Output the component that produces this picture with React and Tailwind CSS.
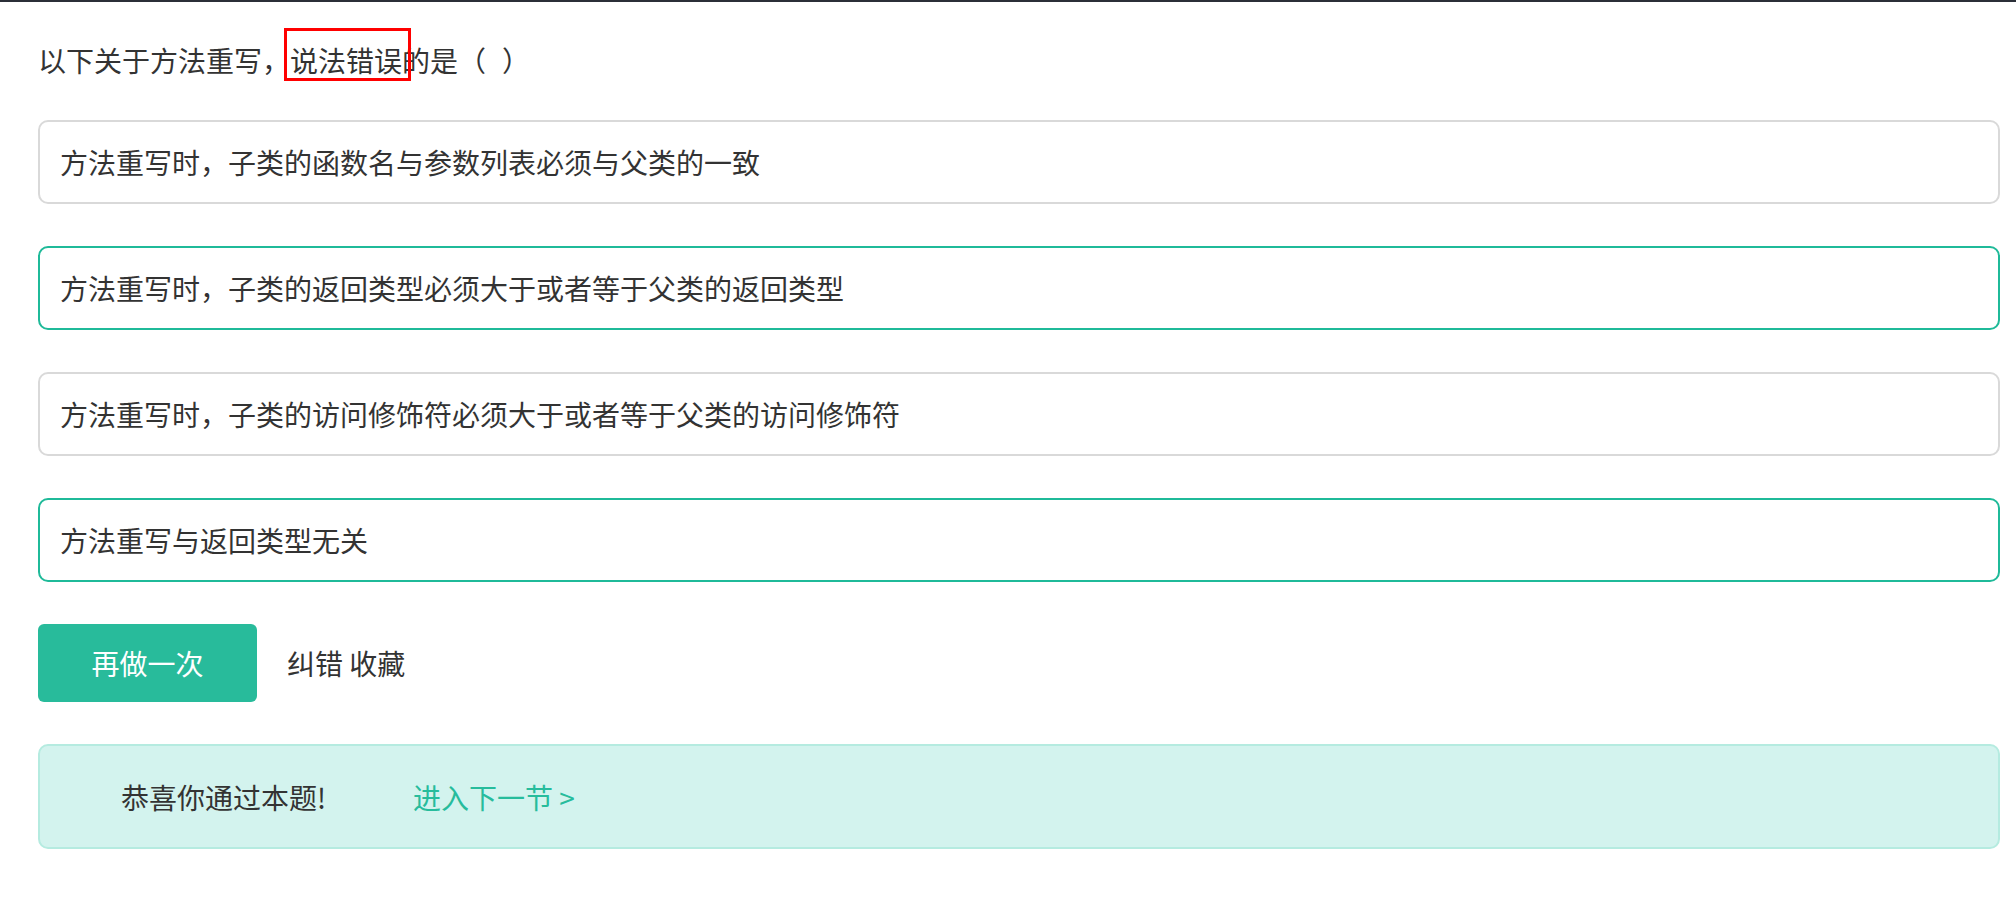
export default function App() {
  const options = [
    { text: "方法重写时，子类的函数名与参数列表必须与父类的一致", green: false },
    { text: "方法重写时，子类的返回类型必须大于或者等于父类的返回类型", green: true },
    { text: "方法重写时，子类的访问修饰符必须大于或者等于父类的访问修饰符", green: false },
    { text: "方法重写与返回类型无关", green: true },
  ];
  return (
    <div
      className="w-[2016px] min-h-[902px] bg-white text-[#333333]"
      style={{ fontFamily: '"Noto Sans CJK SC", "Noto Sans", sans-serif' }}
    >
      <div className="h-[2px] bg-[#2b2f38]" />
      <div className="pl-[38px] pr-[16px]">
        <div className="relative mt-[36px] h-[44px] text-[28px] leading-[44px]">
          以下关于方法重写，说法错误的是（<span className="inline-block w-[16px]" />）
          <div className="absolute left-[246px] top-[-10px] h-[53px] w-[127px] border-[3px] border-[#ff0000]" />
        </div>
        <div className="mt-[38px] flex flex-col gap-[42px]">
          {options.map((o, i) => (
            <div
              key={i}
              className={
                "flex h-[84px] items-center rounded-[10px] border-2 pl-[20px] text-[28px] " +
                (o.green ? "border-[#1fba99]" : "border-[#d9d9d9]")
              }
            >
              {o.text}
            </div>
          ))}
        </div>
        <div className="mt-[42px] flex items-center">
          <div className="flex h-[78px] w-[219px] items-center justify-center rounded-[6px] bg-[#28bb9b] text-[28px] text-white">
            再做一次
          </div>
          <div className="ml-[30px] text-[28px]">纠错 收藏</div>
        </div>
        <div className="mt-[42px] flex h-[105px] items-center rounded-[10px] border-2 border-[#b5ebe0] bg-[#d3f3ee] pl-[81px] text-[28px]">
          <span className="w-[292px]">恭喜你通过本题!</span>
          <span className="text-[#27bc9c]">进入下一节 &gt;</span>
        </div>
      </div>
    </div>
  );
}
